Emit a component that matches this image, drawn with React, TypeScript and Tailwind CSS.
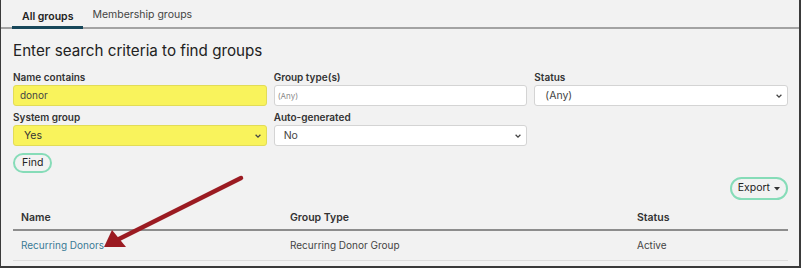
import React from 'react';

function Chevron() {
  return (
    <svg width="8" height="8" viewBox="0 0 10 10" className="shrink-0">
      <path d="M2 3.5 L5 6.5 L8 3.5" fill="none" stroke="#444" strokeWidth="1.6" />
    </svg>
  );
}

function Field({ label, children }: { label: string; children: React.ReactNode }) {
  return (
    <div className="flex flex-col">
      <label className="text-[10px] font-semibold text-[#333] leading-[14px] mb-[1px]">{label}</label>
      {children}
    </div>
  );
}

export default function App() {
  return (
    <div
      className="relative w-[801px] h-[268px] bg-[#f2f2f2] border-l border-r-2 border-b-2 border-[#3a3a3a] overflow-hidden"
      style={{ fontFamily: 'Inter, "Open Sans", sans-serif' }}
    >
      {/* tabs */}
      <div className="flex items-end h-[29px] border-b-2 border-[#a3a3a3] pl-[11px]">
        <div className="px-[10px] h-full flex items-center border-b-[3px] border-[#17475a] -mb-[2px] pt-[5px]">
          <span className="text-[10.5px] font-semibold text-[#222]">All groups</span>
        </div>
        <div className="px-[9px] h-full flex items-center pt-[3px]">
          <span className="text-[10.5px] text-[#444]">Membership groups</span>
        </div>
      </div>

      <div className="pl-[12px] pr-[11px]">
        <h2 className="text-[15.2px] text-[#222] mt-[11px] leading-[22px]">Enter search criteria to find groups</h2>

        <div className="grid grid-cols-3 gap-x-[7px] gap-y-[4px] mt-[8px]">
          <Field label="Name contains">
            <div className="h-[21px] rounded-[3px] bg-[#f9f35c] border border-[#e2dc57] flex items-center px-[6px] text-[10px] text-[#444]">
              donor
            </div>
          </Field>
          <Field label="Group type(s)">
            <div className="h-[21px] rounded-[3px] bg-white border border-[#d4d4d4] flex items-center px-[3px] text-[8px] text-[#888]">
              (Any)
            </div>
          </Field>
          <Field label="Status">
            <div className="h-[21px] rounded-[3px] bg-white border border-[#d4d4d4] flex items-center justify-between pl-[10px] pr-[4px] text-[10.5px] text-[#444]">
              <span>(Any)</span>
              <Chevron />
            </div>
          </Field>
          <Field label="System group">
            <div className="h-[21px] rounded-[3px] bg-[#f9f35c] border border-[#e2dc57] flex items-center justify-between pl-[10px] pr-[4px] text-[10.5px] text-[#333]">
              <span>Yes</span>
              <Chevron />
            </div>
          </Field>
          <Field label="Auto-generated">
            <div className="h-[21px] rounded-[3px] bg-white border border-[#d4d4d4] flex items-center justify-between pl-[9px] pr-[4px] text-[10.5px] text-[#444]">
              <span>No</span>
              <Chevron />
            </div>
          </Field>
        </div>

        <div className="flex mt-[7px]">
          <button className="h-[20px] px-[7px] rounded-full border-2 border-[#86dcb8] text-[10.5px] text-[#222] bg-[#f2f2f2] leading-none">
            Find
          </button>
        </div>

        <div className="flex justify-end mt-[4px]">
          <button className="h-[23px] px-[6px] rounded-full border-2 border-[#86dcb8] text-[10.5px] text-[#222] flex items-center gap-[4px] leading-none">
            Export
            <svg width="6" height="4" viewBox="0 0 6 4">
              <path d="M0 0 H6 L3 3.5 Z" fill="#333" />
            </svg>
          </button>
        </div>

        <div className="mt-[6px]">
          <div className="grid grid-cols-[277px_347px_1fr] h-[25px] items-center border-b-2 border-[#8d8d8d] text-[10.5px] font-semibold text-[#333]">
            <div className="pl-[8px]">Name</div>
            <div>Group Type</div>
            <div>Status</div>
          </div>
          <div className="grid grid-cols-[277px_347px_1fr] h-[30px] items-center border-b border-[#dcdcdc] text-[10px] text-[#444]">
            <div className="pl-[8px] text-[#3a7a95]">Recurring Donors</div>
            <div>Recurring Donor Group</div>
            <div>Active</div>
          </div>
        </div>
      </div>

      {/* annotation arrow */}
      <svg className="absolute left-0 top-0 pointer-events-none" width="801" height="268">
        <line x1="240" y1="178" x2="118" y2="239" stroke="#9b1b22" strokeWidth="4.5" strokeLinecap="round" />
        <polygon points="103,247 111,230 125,247" fill="#9b1b22" />
      </svg>
    </div>
  );
}
